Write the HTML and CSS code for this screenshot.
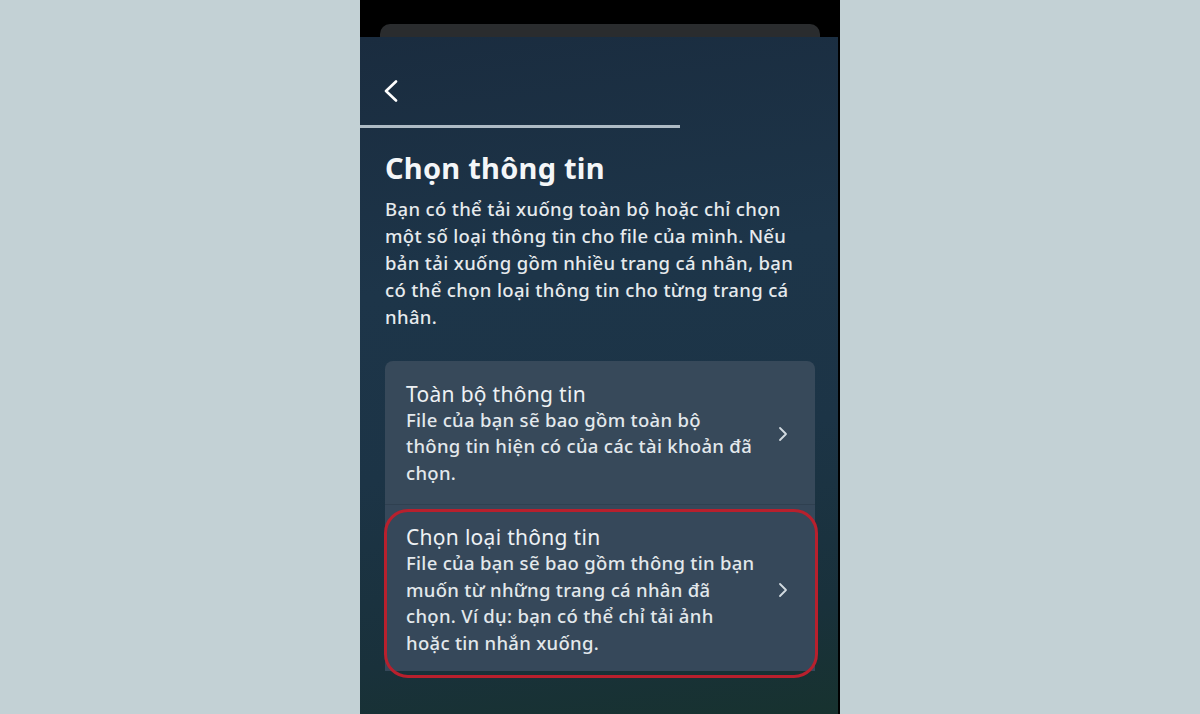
FILE: index.html
```html
<!DOCTYPE html>
<html lang="vi">
<head>
<meta charset="utf-8">
<title>Chọn thông tin</title>
<link rel="stylesheet" href="styles.css">
</head>
<body>
<div class="phone">
  <div class="backsheet"></div>
  <div class="panel">
    <div class="topbar">
      <svg class="back" width="16" height="22" viewBox="0 0 16 22"><path d="M13 1.5 L3 11 L13 20.5" fill="none" stroke="#ffffff" stroke-width="2.6" stroke-linecap="round" stroke-linejoin="round"/></svg>
    </div>
    <div class="progress"></div>
    <div class="content">
      <h1 class="title">Chọn thông tin</h1>
      <p class="desc">Bạn có thể tải xuống toàn bộ hoặc chỉ chọn<br>một số loại thông tin cho file của mình. Nếu<br>bản tải xuống gồm nhiều trang cá nhân, bạn<br>có thể chọn loại thông tin cho từng trang cá<br>nhân.</p>
      <div class="options">
        <div class="option first">
          <div class="otext">
            <div class="otitle">Toàn bộ thông tin</div>
            <div class="obody">File của bạn sẽ bao gồm toàn bộ<br>thông tin hiện có của các tài khoản đã<br>chọn.</div>
          </div>
          <svg class="chev" width="12" height="16" viewBox="0 0 12 16"><path d="M3 2 L9 8 L3 14" fill="none" stroke="#d3dbe1" stroke-width="1.8" stroke-linecap="round" stroke-linejoin="round"/></svg>
        </div>
        <div class="option second">
          <div class="otext">
            <div class="otitle">Chọn loại thông tin</div>
            <div class="obody">File của bạn sẽ bao gồm thông tin bạn<br>muốn từ những trang cá nhân đã<br>chọn. Ví dụ: bạn có thể chỉ tải ảnh<br>hoặc tin nhắn xuống.</div>
          </div>
          <svg class="chev" width="12" height="16" viewBox="0 0 12 16"><path d="M3 2 L9 8 L3 14" fill="none" stroke="#d3dbe1" stroke-width="1.8" stroke-linecap="round" stroke-linejoin="round"/></svg>
          <div class="highlight"></div>
        </div>
      </div>
    </div>
  </div>
</div>
</body>
</html>
```

FILE: styles.css
```css
html, body {
  margin: 0;
  padding: 0;
}
body {
  background: #c3d1d5;
  width: 1200px;
  height: 714px;
  overflow: hidden;
  font-family: "Noto Sans", "Open Sans", sans-serif;
}
.phone {
  width: 480px;
  height: 714px;
  margin: 0 auto;
  background: #000;
  padding-top: 24px;
  box-sizing: border-box;
  display: flex;
  flex-direction: column;
}
.backsheet {
  height: 13px;
  margin: 0 20px 0 20px;
  background: #2a2c2e;
  border-radius: 10px 10px 0 0;
  flex: none;
}
.panel {
  flex: 1;
  margin-right: 2px;
  background: linear-gradient(172deg, #1a2c3f 0%, #1d3549 35%, #1c3446 60%, #19313b 85%, #17322f 100%);
  display: flex;
  flex-direction: column;
}
.topbar {
  height: 88px;
  display: flex;
  align-items: flex-start;
  padding: 43px 0 0 23px;
  box-sizing: border-box;
}
.back {
  display: block;
}
.progress {
  width: 320px;
  height: 3px;
  background: #aebbc5;
}
.content {
  padding: 0 23px 0 25px;
}
.title {
  margin: 22px 0 0 0;
  font-size: 29px;
  line-height: 36px;
  font-weight: 700;
  color: #f4f6f8;
  letter-spacing: 0.25px;
}
.desc {
  margin: 9px 0 0 0;
  font-size: 18.5px;
  line-height: 27px;
  font-weight: 500;
  letter-spacing: 0.35px;
  color: #e6eaed;
}
.options {
  margin-top: 31px;
  display: flex;
  flex-direction: column;
  width: 430px;
}
.option {
  background: #37495a;
  display: flex;
  align-items: center;
  padding: 0 26px 0 21px;
  position: relative;
}
.option.first {
  border-radius: 8px 8px 0 0;
  height: 144px;
  padding-top: 2px;
  box-sizing: border-box;
  border-bottom: 1px solid #2f4050;
}
.option.second {
  height: 166px;
  box-sizing: border-box;
  padding-top: 4px;
  background: #36485a;
}
.otext {
  flex: 1;
}
.otitle {
  font-size: 21px;
  line-height: 26px;
  letter-spacing: 0.3px;
  color: #eef1f4;
}
.obody {
  font-size: 18.5px;
  line-height: 26.5px;
  font-weight: 500;
  letter-spacing: 0.3px;
  color: #e3e8ec;
}
.chev {
  flex: none;
  display: block;
}
.highlight {
  position: absolute;
  top: 4px;
  left: -1px;
  right: -3px;
  bottom: -7px;
  border: 3.5px solid #b8202d;
  border-radius: 24px;
  pointer-events: none;
}
```
